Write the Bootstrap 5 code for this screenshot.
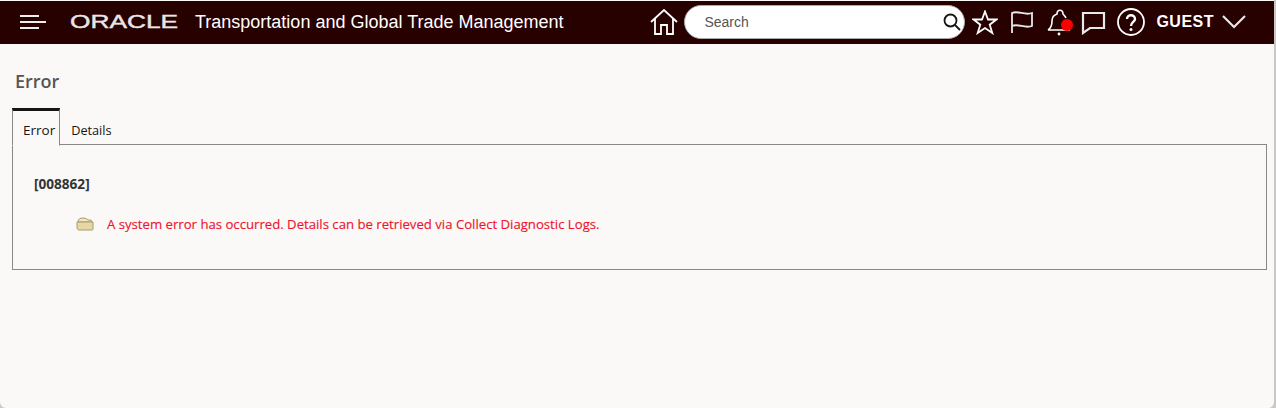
<!DOCTYPE html>
<html lang="en">
<head>
    <meta charset="UTF-8">
    <meta name="viewport" content="width=device-width, initial-scale=1.0">
    <title>Error</title>
    <link rel="stylesheet" href="https://cdn.jsdelivr.net/npm/bootstrap@5.3.0/dist/css/bootstrap.min.css">
    <style>
        html, body { height: 100%; }
        body {
            background-color: #c9c8c6;
            font-family: "Open Sans", "Noto Sans", sans-serif;
            overflow: hidden;
        }
        .page-frame {
            height: 408px;
            padding-top: 1px;
            margin-right: 2px;
            background-color: #faf9f7;
            border-radius: 0 0 6px 6px;
        }
        .app-bar {
            height: 43px;
            background-color: #270000;
            color: #fff;
            padding: 0 28px 1px 20px;
        }
        .app-bar svg { display: block; flex: none; }
        .brand-word {
            width: 125px;
            margin-left: 23px;
            font-family: "Liberation Sans", sans-serif;
            font-size: 18px;
            line-height: 18px;
            color: #e9e6e4;
            transform: scaleX(1.46);
            transform-origin: left center;
            -webkit-text-stroke: .4px #e9e6e4;
        }
        .brand-title {
            font-family: "Liberation Sans", sans-serif;
            font-size: 18px;
            white-space: nowrap;
        }
        .search-pill {
            width: 281px;
            height: 34px;
            margin-left: 6px;
            background: #fff;
            border: 1px solid #aaa;
            border-radius: 17px;
            padding: 0 3px 0 19px;
        }
        .search-pill span {
            font-family: "Liberation Sans", sans-serif;
            font-size: 14px;
            color: #555;
        }
        .guest-name {
            font-family: "Liberation Sans", sans-serif;
            font-size: 16px;
            font-weight: 700;
            letter-spacing: .5px;
        }
        .icon-star { margin-left: 7px; }
        .icon-flag { margin-left: 12px; }
        .icon-bell { margin-left: 13px; width: 26px; height: 28px; }
        .icon-chat { margin-left: 8px; }
        .icon-help { margin-left: 11px; }
        .bell-dot {
            width: 12px;
            height: 12px;
            left: 14px;
            top: 11px;
            background: #f00;
        }
        .page-title {
            font-size: 18px;
            font-weight: 600;
            color: #555;
            margin: 25px 0 15px 15px;
            line-height: 24px;
        }
        .tab-wrap { margin: 0 7px 0 12px; }
        .tab-wrap .nav-tabs {
            border-bottom: 0;
            margin-bottom: -1px;
            position: relative;
        }
        .tab-wrap .nav-link {
            font-size: 12.7px;
            line-height: 18px;
            color: #161513;
            padding: 13px 4px 4px 11px;
            border: 0;
            border-radius: 0;
            background: transparent;
        }
        .tab-wrap .nav-link.active {
            font-size: 13.5px;
            padding: 10px 4px 6px 10px;
            color: #161513;
            background: #faf9f7;
            border: 1px solid #8a8886;
            border-top: 3px solid #161513;
            border-bottom: 1px solid #faf9f7;
        }
        .tab-body {
            height: 126px;
            border: 1px solid #8a8886;
            padding: 30px 21px 0;
        }
        .err-code {
            font-size: 13.6px;
            font-weight: 700;
            color: #333;
            line-height: 18px;
        }
        .err-line {
            margin: 22px 0 0 42px;
            gap: 13px;
            font-size: 13.16px;
            font-weight: 500;
            line-height: 18px;
            color: #f0142f;
            -webkit-text-stroke: .15px #f0142f;
        }
    </style>
</head>
<body>
    <div class="page-frame">
        <nav class="app-bar d-flex align-items-center">
            <svg width="27" height="16" viewBox="0 0 27 16" fill="none" stroke="#eee" stroke-width="2">
                <path d="M0 2h19M0 8h26M0 14h19"/>
            </svg>
            <div class="d-flex align-items-center flex-grow-1">
                <span class="brand-word">ORACLE</span>
                <span class="brand-title">Transportation and Global Trade Management</span>
            </div>
            <svg width="28" height="26" viewBox="0 0 28 26" fill="none" stroke="#fff" stroke-width="1.8">
                <path d="M1 13 14 1l13 12M5 10v15h6v-9h6v9h6V10"/>
            </svg>
            <div class="search-pill d-flex align-items-center justify-content-between">
                <span>Search</span>
                <svg width="18" height="18" viewBox="0 0 18 18" fill="none" stroke="#161513" stroke-width="1.8">
                    <circle cx="7.500" cy="7.500" r="6"/><path d="m12 12 5 5"/>
                </svg>
            </div>
            <svg class="icon-star" width="26" height="25" viewBox="0 0 26 25" fill="none" stroke="#fff" stroke-width="1.8">
                <path d="M13 1.500l3 8h8.500l-6.800 5.200 2.600 8.300-7.300-5-7.300 5 2.600-8.300-6.800-5.200H10z"/>
            </svg>
            <svg class="icon-flag" width="24" height="24" viewBox="0 0 24 24" fill="none" stroke="#e8e8e8" stroke-width="1.800">
                <path d="M2 23V3c6-3 13 3 20 0v13c-7 3-14-3-20 0"/>
            </svg>
            <div class="icon-bell position-relative">
                <svg width="26" height="28" viewBox="0 0 26 28" fill="none" stroke="#fff" stroke-width="1.600">
                    <path d="M1 22c3-2 4-4 4-9 0-4 2-6 5-7 0-5 6-5 6 0 1 1 2 2 3 4M1 22h22"/>
                    <circle cx="12" cy="26" r="1.400" fill="#fff" stroke="none"/>
                </svg>
                <span class="bell-dot position-absolute rounded-circle"></span>
            </div>
            <svg class="icon-chat" width="25" height="25" viewBox="0 0 25 25" fill="none" stroke="#e8e8e8" stroke-width="2.200">
                <path d="M2 3h21v15H9l-7 5z"/>
            </svg>
            <svg class="icon-help" width="28" height="28" viewBox="0 0 28 28" fill="none" stroke="#fff" stroke-width="1.800">
                <circle cx="14" cy="14" r="13"/>
                <path stroke-width="2.400" d="M10 11c0-5 8-5 8 0 0 3-4 3-4 7"/>
                <circle cx="14" cy="21.500" r="1.500" fill="#fff" stroke="none"/>
            </svg>
            <span class="guest-name icon-help">GUEST</span>
            <svg class="ms-2" width="24" height="14" viewBox="0 0 24 14" fill="none" stroke="#e8e8e8" stroke-width="2.200">
                <path d="m1 1 11 11L23 1"/>
            </svg>
        </nav>

        <h1 class="page-title">Error</h1>

        <div class="tab-wrap">
            <ul class="nav nav-tabs">
                <li class="nav-item"><button class="nav-link active" type="button">Error</button></li>
                <li class="nav-item"><button class="nav-link" type="button">Details</button></li>
            </ul>
            <div class="tab-body">
                <div class="err-code">[008862]</div>
                <div class="err-line d-flex align-items-center">
                    <svg width="18" height="14" viewBox="0 0 18 14">
                        <path d="M2 5c0-3 2-4 5-4s4 1 5 2h3l1 2z" fill="#efe6c4" stroke="#a89a6c"/>
                        <path d="M1 5h16v7c0 1-1 1-1 1H3c-1 0-2-1-2-2z" fill="#e6d8a4" stroke="#a89a6c"/>
                    </svg>
                    <span>A system error has occurred. Details can be retrieved via Collect Diagnostic Logs.</span>
                </div>
            </div>
        </div>
    </div>
    <script src="https://cdn.jsdelivr.net/npm/bootstrap@5.3.0/dist/js/bootstrap.bundle.min.js"></script>
</body>
</html>
